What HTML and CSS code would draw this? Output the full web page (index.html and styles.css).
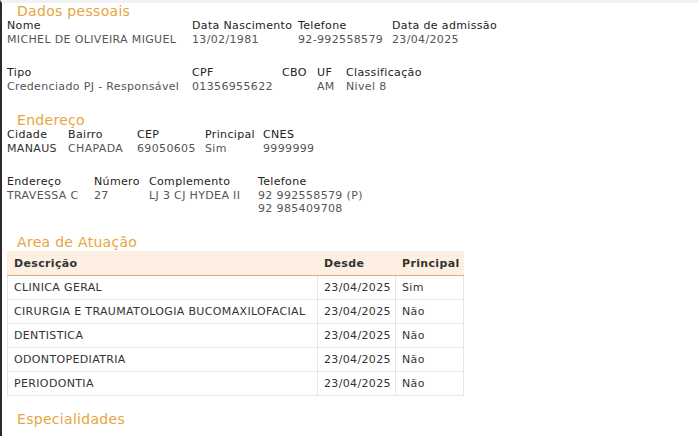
FILE: index.html
```html
<!DOCTYPE html>
<html lang="pt">
<head>
<meta charset="utf-8">
<title>Dados pessoais</title>
<link rel="stylesheet" href="styles.css">
</head>
<body>
<div class="page">
  <h2 class="section-title first">Dados pessoais</h2>
  <div class="fields cols-a">
    <div class="field"><div class="label">Nome</div><div class="value">MICHEL DE OLIVEIRA MIGUEL</div></div>
    <div class="field"><div class="label">Data Nascimento</div><div class="value">13/02/1981</div></div>
    <div class="field"><div class="label">Telefone</div><div class="value">92-992558579</div></div>
    <div class="field"><div class="label">Data de admissão</div><div class="value">23/04/2025</div></div>
  </div>
  <div class="fields cols-b">
    <div class="field"><div class="label">Tipo</div><div class="value">Credenciado PJ - Responsável</div></div>
    <div class="field"><div class="label">CPF</div><div class="value">01356955622</div></div>
    <div class="field"><div class="label">CBO</div><div class="value"></div></div>
    <div class="field"><div class="label">UF</div><div class="value">AM</div></div>
    <div class="field"><div class="label">Classificação</div><div class="value">Nivel 8</div></div>
  </div>

  <h2 class="section-title">Endereço</h2>
  <div class="fields cols-c">
    <div class="field"><div class="label">Cidade</div><div class="value strong">MANAUS</div></div>
    <div class="field"><div class="label">Bairro</div><div class="value">CHAPADA</div></div>
    <div class="field"><div class="label">CEP</div><div class="value">69050605</div></div>
    <div class="field"><div class="label">Principal</div><div class="value">Sim</div></div>
    <div class="field"><div class="label">CNES</div><div class="value">9999999</div></div>
  </div>
  <div class="fields cols-d">
    <div class="field"><div class="label">Endereço</div><div class="value">TRAVESSA C</div></div>
    <div class="field"><div class="label">Número</div><div class="value">27</div></div>
    <div class="field"><div class="label">Complemento</div><div class="value">LJ 3 CJ HYDEA II</div></div>
    <div class="field"><div class="label">Telefone</div><div class="value">92 992558579 (P)</div><div class="value">92 985409708</div></div>
  </div>

  <h2 class="section-title">Area de Atuação</h2>
  <table class="grid">
    <colgroup><col class="c1"><col class="c2"><col class="c3"></colgroup>
    <thead>
      <tr><th>Descrição</th><th>Desde</th><th>Principal</th></tr>
    </thead>
    <tbody>
      <tr><td>CLINICA GERAL</td><td>23/04/2025</td><td>Sim</td></tr>
      <tr><td>CIRURGIA E TRAUMATOLOGIA BUCOMAXILOFACIAL</td><td>23/04/2025</td><td>Não</td></tr>
      <tr><td>DENTISTICA</td><td>23/04/2025</td><td>Não</td></tr>
      <tr><td>ODONTOPEDIATRIA</td><td>23/04/2025</td><td>Não</td></tr>
      <tr><td>PERIODONTIA</td><td>23/04/2025</td><td>Não</td></tr>
    </tbody>
  </table>

  <h2 class="section-title last">Especialidades</h2>
</div>
</body>
</html>
```

FILE: styles.css
```css
html, body {
  margin: 0;
  padding: 0;
  background: #fff;
}
body {
  font-family: "DejaVu Sans", Verdana, sans-serif;
  font-size: 11px;
  letter-spacing: 0.35px;
  color: #222;
  height: 436px;
  overflow: hidden;
  box-sizing: border-box;
  border-left: 2px solid #2b2b2b;
  border-top: 3px solid #f2f2f2;
}
.page {
  padding-left: 5px;
}
.section-title {
  margin: 19px 0 0 10px;
  font-size: 14px;
  line-height: 16px;
  letter-spacing: 0.3px;
  font-weight: normal;
  color: #e8a53c;
}
.section-title.first {
  margin-top: 0;
}
.section-title.last {
  margin-top: 15px;
}
.fields {
  display: grid;
  line-height: 13px;
}
.fields + .fields {
  margin-top: 20px;
}
.cols-a { grid-template-columns: 185px 106px 94px auto; }
.cols-b { grid-template-columns: 185px 90px 35px 29px auto; }
.cols-c { grid-template-columns: 61px 69px 68px 58px auto; }
.cols-d { grid-template-columns: 87px 55px 109px auto; }
.label {
  color: #222;
  line-height: 14px;
}
.value {
  color: #555;
  white-space: nowrap;
}
.value.strong {
  color: #333;
}
.grid {
  margin-top: 1px;
  border-collapse: collapse;
  table-layout: fixed;
  width: 456px;
  color: #333;
}
.grid col.c1 { width: 310px; }
.grid col.c2 { width: 78px; }
.grid col.c3 { width: 68px; }
.grid th, .grid td {
  height: 23px;
  padding: 0 6px;
  text-align: left;
  white-space: nowrap;
  overflow: hidden;
  border: 1px solid #e6e6e6;
}
.grid th {
  background: #fdf0e2;
  font-weight: bold;
  color: #333;
  border-color: #fdf0e2;
  border-bottom: 1px solid #e2a877;
}
.grid td {
  border-top: none;
}
```
